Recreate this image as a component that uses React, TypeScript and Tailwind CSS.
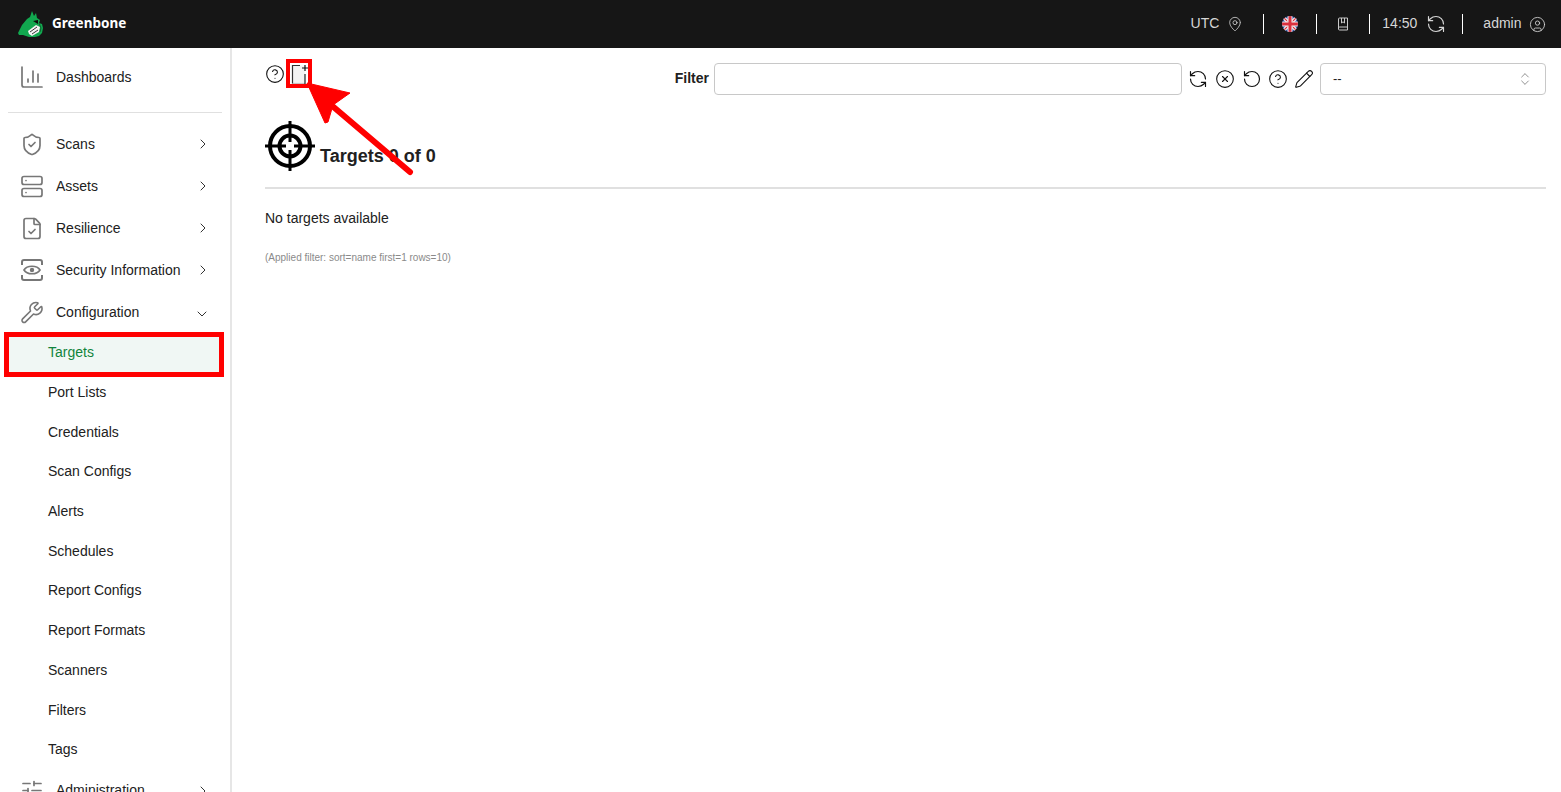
import {
  ChevronDown,
  ChevronRight,
  ChevronsUpDown,
  CircleHelp,
  CircleUser,
  CircleX,
  FileCheck,
  MapPin,
  Pencil,
  RefreshCcw,
  RotateCcw,
  Server,
  ShieldCheck,
  SlidersHorizontal,
  Wrench,
} from 'lucide-react';
import type { ReactNode } from 'react';

const subItems = ['Targets', 'Port Lists', 'Credentials', 'Scan Configs', 'Alerts', 'Schedules', 'Report Configs', 'Report Formats', 'Scanners', 'Filters', 'Tags'];

function GreenboneLogo() {
  return (
    <svg width="26" height="27" viewBox="0 0 26 27">
      <path d="M0 22 L4 14 L9 8 L12 6 L14 0 L16 5 L18 2 L19 7 L22 9 L21 12 L24 13 L25 17 L24 22 L21 25 L17 26 L11 26 L5 24 L1 24 Z" fill="#11a84f" />
      <path d="M15 10 L20 13 L20 9 Z" fill="#0b0b0b" />
      <path d="M21 12 L23 17 L22 21" stroke="#0f5f30" strokeWidth="1" fill="none" />
      <path d="M10 20 L18 14 L22 16 L21 21 L14 25 L11 23 Z" fill="#f4f4f4" />
      <path d="M12 21 L19 16 M14 23 L20 19" stroke="#222" strokeWidth="0.9" />
    </svg>
  );
}

function FlagUk() {
  return (
    <svg width="16" height="16" viewBox="0 0 16 16">
      <clipPath id="flag-clip"><circle cx="8" cy="8" r="8" /></clipPath>
      <g clipPath="url(#flag-clip)">
        <rect width="16" height="16" fill="#2b4a9b" />
        <path d="M0 0 L16 16 M16 0 L0 16" stroke="#f2f2f2" strokeWidth="3.4" />
        <path d="M0 0 L16 16 M16 0 L0 16" stroke="#d9303e" strokeWidth="1.2" />
        <path d="M8 0 V16 M0 8 H16" stroke="#f2f2f2" strokeWidth="5" />
        <path d="M8 0 V16 M0 8 H16" stroke="#d9303e" strokeWidth="3" />
      </g>
    </svg>
  );
}

function ChartIcon() {
  return (
    <svg width="24" height="24" viewBox="0 0 24 24" fill="none" stroke="#777" strokeWidth="1.7" strokeLinecap="round">
      <path d="M2 2 V20 A2 2 0 0 0 4 22 H22" />
      <path d="M8 17 V14 M13 17 V6 M18 17 V9" />
    </svg>
  );
}

function EyeFrameIcon() {
  return (
    <svg width="24" height="24" viewBox="0 0 24 24" fill="none" stroke="#777" strokeWidth="2">
      <path d="M2 7 V4 A2 2 0 0 1 4 2 H20 A2 2 0 0 1 22 4 V7" />
      <path d="M2 17 V20 A2 2 0 0 0 4 22 H20 A2 2 0 0 0 22 20 V17" />
      <path d="M4 12 C7 7 17 7 20 12 C17 17 7 17 4 12 Z" strokeWidth="1.7" />
      <circle cx="12" cy="12" r="2.2" fill="#777" stroke="none" />
    </svg>
  );
}

function BookIcon() {
  return (
    <svg width="12" height="14" viewBox="0 0 12 14" fill="none" stroke="#c9c9c9" strokeWidth="1">
      <path d="M1.5 11 V2 A1 1 0 0 1 2.5 1 H10.5 V13 H2.5 A1 1 0 0 1 1.5 12 V11 A1 1 0 0 1 2.5 10 H10.5" />
      <path d="M4.5 1 V6 L6 4.8 L7.5 6 V1" />
    </svg>
  );
}

function NewIcon() {
  return (
    <svg width="20" height="24" viewBox="0 0 20 24" fill="none">
      <path d="M2.5 3.5 H15 V21.5 H2.5 Z" fill="#f3f3f3" />
      <path d="M2.5 21.5 H15" stroke="#c4c4c4" strokeWidth="1.2" />
      <path d="M10 3.5 H2.5 V21.5" stroke="#333" strokeWidth="1.2" />
      <path d="M15 12 V22" stroke="#222" strokeWidth="1.2" />
      <path d="M15 3 V9 M12 6 H18" stroke="#111" strokeWidth="1.2" />
    </svg>
  );
}

function TargetIcon() {
  return (
    <svg width="50" height="50" viewBox="0 0 50 50" fill="none" stroke="#000" strokeWidth="4">
      <circle cx="25" cy="25" r="20" />
      <circle cx="25" cy="25" r="10.5" />
      <path d="M25 0 V21 M25 29 V50 M0 25 H21 M29 25 H50" strokeWidth="3" />
    </svg>
  );
}

function NavRow({ icon, label, open }: { icon: ReactNode; label: string; open?: boolean }) {
  return (
    <div className="h-[42px] flex items-center pl-5 pr-[19px] text-[14px] text-[#212121]">
      <span className="w-6 h-6 flex items-center justify-center text-[#777] shrink-0">{icon}</span>
      <span className="ml-3 flex-1 truncate">{label}</span>
      {open === undefined ? null : open ? <ChevronDown size={16} strokeWidth={1.5} className="text-[#333] mr-px mt-[3px]" /> : <ChevronRight size={16} strokeWidth={1.5} className="text-[#333]" />}
    </div>
  );
}

function Sep() {
  return <div className="w-px h-5 bg-white shrink-0" />;
}

export default function App() {
  return (
    <div className="relative h-screen overflow-hidden bg-white font-['Liberation_Sans',Arial,sans-serif]">
      <header className="h-12 bg-[#161616] flex items-center pl-[18px] pr-4 text-[14px] text-[#d6d6d6]">
        <GreenboneLogo />
        <span className="ml-2 pb-[2px] text-[13.5px] font-bold text-white font-['Noto_Sans',sans-serif]">Greenbone</span>
        <div className="ml-auto flex items-center">
          <span className="pb-[2px]">UTC</span>
          <MapPin size={16} strokeWidth={1.2} className="ml-2 mr-5" />
          <Sep />
          <span className="mx-[18px]"><FlagUk /></span>
          <Sep />
          <span className="mx-[20px] flex"><BookIcon /></span>
          <Sep />
          <span className="ml-3 pb-[2px]">14:50</span>
          <RefreshCcw size={20} strokeWidth={1.4} className="ml-[9px] mr-4" />
          <Sep />
          <span className="ml-5 pb-[2px]">admin</span>
          <CircleUser size={17} strokeWidth={1.2} className="ml-[7px] -mr-[0.5px]" />
        </div>
      </header>

      <div className="flex h-[744px]">
        <aside className="w-[232px] shrink-0 border-r-2 border-[#e6e6e6] pt-2 overflow-hidden">
          <NavRow icon={<ChartIcon />} label="Dashboards" />
          <div className="mx-2 mt-[14px] mb-[10px] h-px bg-[#e0e0e0]" />
          <NavRow icon={<ShieldCheck size={25} strokeWidth={1.7} />} label="Scans" open={false} />
          <NavRow icon={<Server size={25} strokeWidth={1.7} />} label="Assets" open={false} />
          <NavRow icon={<FileCheck size={25} strokeWidth={1.7} />} label="Resilience" open={false} />
          <NavRow icon={<EyeFrameIcon />} label="Security Information" open={false} />
          <NavRow icon={<Wrench size={25} strokeWidth={1.6} />} label="Configuration" open />
          <div>
            {subItems.map((item, i) => (
              <div
                key={item}
                className={
                  i === 0
                    ? 'h-[39.7px] mx-2 pl-10 flex items-center text-[14px] text-[#11843c] bg-[#f0f7f4]'
                    : 'h-[39.7px] mx-2 pl-10 flex items-center text-[14px] text-[#212121]'
                }
              >
                {item}
              </div>
            ))}
          </div>
          <NavRow icon={<SlidersHorizontal size={25} strokeWidth={1.7} />} label="Administration" open={false} />
        </aside>

        <main className="flex-1 pl-[33px] pr-[15px] text-[14px] text-[#212121]">
          <div className="h-[47px] mt-[15px] flex items-start">
            <CircleHelp size={20} strokeWidth={1.3} className="text-[#111] mt-[1px]" />
            <span className="ml-[5px] -mt-[1px]"><NewIcon /></span>
            <div className="ml-auto flex items-center">
              <span className="font-bold mr-[5px] pb-[2px]">Filter</span>
              <div className="w-[468px] h-8 border border-[#c8c8c8] rounded-[4px]" />
              <div className="flex items-center ml-[6px] text-[#111]">
                <RefreshCcw size={20} strokeWidth={1.4} />
                <CircleX size={20} strokeWidth={1.3} className="ml-[7px]" />
                <RotateCcw size={20} strokeWidth={1.4} className="ml-[7px]" />
                <CircleHelp size={20} strokeWidth={1.3} className="ml-[6px]" />
                <Pencil size={20} strokeWidth={1.3} className="ml-[6px]" />
              </div>
              <div className="ml-[6px] w-[226px] h-8 border border-[#c8c8c8] rounded-[4px] flex items-center justify-between pl-3 pr-3">
                <span className="text-[13px]">--</span>
                <ChevronsUpDown size={16} strokeWidth={1.2} className="text-[#777]" />
              </div>
            </div>
          </div>

          <div className="flex items-end mt-[11px] h-[50px]">
            <TargetIcon />
            <span className="ml-[5px] mb-[1px] text-[18px] font-bold text-[#212121]">Targets 0 of 0</span>
          </div>
          <div className="mt-4 h-[2px] bg-[#e0e0e0]" />
          <p className="mt-[21px] leading-4">No targets available</p>
          <p className="mt-[26px] text-[10px] leading-3 text-[#8a8a8a]">(Applied filter: sort=name first=1 rows=10)</p>
        </main>
      </div>

      {/* annotations painted on the screenshot */}
      <div className="absolute left-1 top-[332px] w-[220px] h-[45px] border-[5px] border-[#ff0000]" />
      <div className="absolute left-[286px] top-[59px] w-[26px] h-[29px] border-4 border-[#ff0000]" />
      <svg className="absolute left-0 top-0 pointer-events-none" width="1561" height="792">
        <path d="M410 172 L330 104" stroke="#ff0000" strokeWidth="6" strokeLinecap="round" />
        <path d="M307 83 L350 93 L333 105 L328 122 L325 123 Z" fill="#ff0000" stroke="#ff0000" strokeWidth="1" strokeLinejoin="round" />
      </svg>
    </div>
  );
}
